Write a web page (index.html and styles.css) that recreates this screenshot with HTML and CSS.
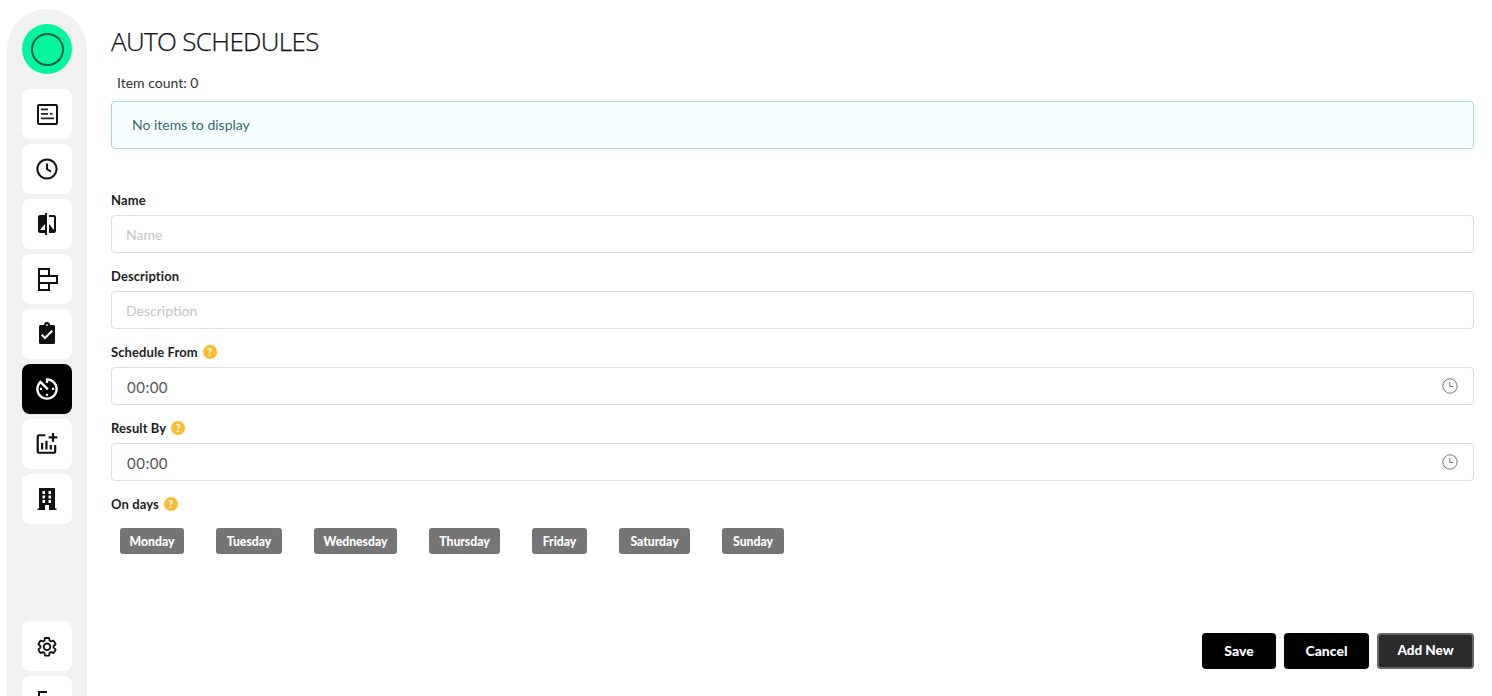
FILE: index.html
```html
<!DOCTYPE html>
<html lang="en">
<head>
<meta charset="utf-8">
<title>Auto Schedules</title>
<link rel="stylesheet" href="styles.css">
</head>
<body>
<div class="app">
  <nav class="sidebar">
    <div class="avatar"><span class="avatar-ring"></span></div>
    <div class="nav-list">
      <a class="nav-btn"><svg class="ic" viewBox="0 0 24 24"><rect x="3" y="3" width="19" height="19" rx="1" fill="none" stroke="#111" stroke-width="2"/><path d="M6 6.500h7v1.700H6zM6 11h7v1.700H6zM15 11h2.500v1.700H15zM6 15.500h13v1.700H6z" fill="#222"/></svg></a>
      <a class="nav-btn"><svg class="ic" viewBox="0 0 24 24"><circle cx="12" cy="12" r="9.600" fill="none" stroke="#111" stroke-width="2"/><path d="M12 6.500V12l4 2.600" fill="none" stroke="#111" stroke-width="2"/></svg></a>
      <a class="nav-btn"><svg class="ic" viewBox="0 0 24 24"><path d="M10 3H5c-1.100 0-2 .9-2 2v14c0 1.100.9 2 2 2h5v2h2V1h-2v2zm0 15H5l5-6v6zm9-15h-5v2h5v13l-5-6v9h5c1.100 0 2-.9 2-2V5c0-1.100-.9-2-2-2z" fill="#111"/></svg></a>
      <a class="nav-btn"><svg class="ic" viewBox="0 0 24 24"><path d="M4 2h10v7H4zM4 9h18v7H4zM4 16h10v7H4z" fill="none" stroke="#111" stroke-width="2"/></svg></a>
      <a class="nav-btn"><svg class="ic" viewBox="0 0 24 24"><path d="M18.500 3H15a3 3 0 0 0-6 0H5.500A1.500 1.500 0 0 0 4 4.500v16A1.500 1.500 0 0 0 5.500 22h13a1.500 1.500 0 0 0 1.500-1.500v-16A1.500 1.500 0 0 0 18.500 3zM12 2.200a.9.9 0 1 1 0 1.800.9.900 0 0 1 0-1.800zM10 17.500l-4-4 1.500-1.500 2.500 2.500 6.500-6.500L18 9.500l-8 8z" fill="#111" fill-rule="evenodd"/></svg></a>
      <a class="nav-btn active"><svg class="ic" viewBox="2 2 20 20"><path d="M11 17c0 .55.45 1 1 1s1-.45 1-1-.45-1-1-1-1 .45-1 1zm0-14v4h2V5.080c3.390.49 6 3.390 6 6.920 0 3.870-3.130 7-7 7s-7-3.130-7-7c0-1.680.59-3.220 1.580-4.420L12 13l1.410-1.410-6.800-6.800v.020C4.420 6.450 3 9.050 3 12c0 4.970 4.020 9 9 9 4.970 0 9-4.030 9-9s-4.030-9-9-9h-1zm7 9c0-.55-.45-1-1-1s-1 .45-1 1 .45 1 1 1 1-.45 1-1zM6 12c0 .55.45 1 1 1s1-.45 1-1-.45-1-1-1-1 .45-1 1z" fill="#fff"/></svg></a>
      <a class="nav-btn"><svg class="ic" viewBox="1.500 1 22 22"><path d="M22 5v2h-3v3h-2V7h-3V5h3V2h2v3h3zm-3 14H5V5h6V3H5c-1.100 0-2 .9-2 2v14c0 1.100.9 2 2 2h14c1.100 0 2-.9 2-2v-6h-2v6zm-4-6v4h2v-4h-2zm-4 4h2V9h-2v8zm-2 0v-6H7v6h2z" fill="#111"/></svg></a>
      <a class="nav-btn"><svg class="ic" viewBox="0 0 24 24"><path d="M4 1h16v20.500h1.500V23h-19v-1.500H4zM7.500 4v3H10V4zM13.500 4v3H16V4zM7.500 8.500v3H10v-3zM13.500 8.500v3H16v-3zM7.500 13v3H10v-3zM13.500 13v3H16v-3zM10 18v5h4v-5z" fill="#111" fill-rule="evenodd"/></svg></a>
    </div>
    <div class="nav-list nav-bottom">
      <a class="nav-btn"><svg class="ic" viewBox="0 0 24 24"><path transform="translate(12 12.800) scale(.92) translate(-12 -12)" d="M19.140 12.940c.04-.3.06-.61.06-.94 0-.32-.02-.64-.07-.94l2.030-1.580c.18-.14.23-.41.12-.61l-1.920-3.320c-.12-.22-.37-.29-.59-.22l-2.390.96c-.5-.38-1.030-.7-1.620-.94l-.36-2.540c-.04-.24-.24-.41-.48-.41h-3.840c-.24 0-.43.17-.47.41l-.36 2.540c-.59.24-1.130.57-1.620.94l-2.390-.96c-.22-.08-.47 0-.59.22L2.740 8.870c-.12.21-.08.47.12.61l2.030 1.580c-.05.3-.09.63-.09.94s.02.64.07.94l-2.030 1.580c-.18.14-.23.41-.12.61l1.920 3.320c.12.22.37.29.59.22l2.390-.96c.5.38 1.030.7 1.620.94l.36 2.540c.05.24.24.41.48.41h3.840c.24 0 .44-.17.47-.41l.36-2.540c.59-.24 1.130-.56 1.620-.94l2.390.96c.22.08.47 0 .59-.22l1.920-3.320c.12-.22.07-.47-.12-.61l-2.010-1.580zM12 15.600c-1.980 0-3.600-1.620-3.600-3.600s1.620-3.600 3.600-3.600 3.600 1.620 3.600 3.600-1.620 3.600-3.600 3.600z" fill="none" stroke="#111" stroke-width="2"/></svg></a>
      <a class="nav-btn"><svg class="ic" viewBox="0 0 24 24"><path d="M12 3H4v18h8" fill="none" stroke="#111" stroke-width="2"/></svg></a>
    </div>
  </nav>

  <main class="content">
    <h1 class="title">AUTO SCHEDULES</h1>
    <p class="count">Item count: 0</p>
    <div class="alert">No items to display</div>

    <form class="form">
      <div class="field">
        <label class="label">Name</label>
        <input class="input" type="text" placeholder="Name">
      </div>
      <div class="field">
        <label class="label">Description</label>
        <input class="input" type="text" placeholder="Description">
      </div>
      <div class="field">
        <label class="label">Schedule From <span class="help">?</span></label>
        <div class="input time"><span class="time-value">00:00</span><svg class="clock" viewBox="0 0 16 16"><circle cx="8" cy="8" r="7.200" fill="none" stroke="#777" stroke-width="1"/><path d="M7.800 3.800V8.500h3.400" fill="none" stroke="#777" stroke-width="1"/></svg></div>
      </div>
      <div class="field">
        <label class="label">Result By <span class="help">?</span></label>
        <div class="input time"><span class="time-value">00:00</span><svg class="clock" viewBox="0 0 16 16"><circle cx="8" cy="8" r="7.200" fill="none" stroke="#777" stroke-width="1"/><path d="M7.800 3.800V8.500h3.400" fill="none" stroke="#777" stroke-width="1"/></svg></div>
      </div>
      <div class="field">
        <label class="label">On days <span class="help">?</span></label>
        <div class="days">
          <button class="day" type="button">Monday</button>
          <button class="day" type="button">Tuesday</button>
          <button class="day" type="button">Wednesday</button>
          <button class="day" type="button">Thursday</button>
          <button class="day" type="button">Friday</button>
          <button class="day" type="button">Saturday</button>
          <button class="day" type="button">Sunday</button>
        </div>
      </div>
      <div class="actions">
        <button class="btn btn-save" type="button">Save</button>
        <button class="btn btn-cancel" type="button">Cancel</button>
        <button class="btn btn-add" type="button">Add New</button>
      </div>
    </form>
  </main>
</div>
</body>
</html>
```

FILE: styles.css
```css
* { box-sizing: border-box; }
html, body { margin: 0; height: 696px; overflow: hidden; background: #fff; }
body { font-family: "Lato", "Noto Sans", sans-serif; color: #212529; font-size: 14px; }
.app { display: flex; height: 696px; overflow: hidden; padding-left: 7px; padding-top: 9px; align-items: flex-start; }
.sidebar { width: 80px; flex: none; height: 687px; overflow: hidden; background: #f1f1f1; border-radius: 40px 40px 0 0; padding: 15px 15px 0; display: flex; flex-direction: column; }
.avatar { width: 50px; height: 50px; border-radius: 50%; background: #04f5a0; display: flex; align-items: center; justify-content: center; flex: none; }
.avatar-ring { width: 33px; height: 33px; border-radius: 50%; border: 2px solid #0c5a45; }
.nav-list { display: flex; flex-direction: column; gap: 5px; margin-top: 15px; flex: none; }
.nav-bottom { margin-top: 97px; }
.nav-btn { width: 50px; height: 50px; background: #fff; border-radius: 8px; display: flex; align-items: center; justify-content: center; flex: none; }
.nav-btn.active { background: #000; }
.ic { width: 24px; height: 24px; display: block; }
.content { flex: 1; min-width: 0; padding: 0 18px 0 24px; }
.title { margin: 14px 0 0; font-family: "Open Sans", sans-serif; font-weight: 300; font-size: 26px; line-height: 36px; color: #111; letter-spacing: -0.65px; -webkit-text-stroke: 0.25px #111; }
.count { margin: 14px 0 0 6px; line-height: 20px; font-size: 14px; color: #333; }
.alert { margin-top: 8px; height: 48px; border: 1px solid #a6d8de; border-radius: 4px; background: #f6ffff; color: #356a70; padding: 0 20px 2px; display: flex; align-items: center; }
.form { margin-top: 41px; display: flex; flex-direction: column; }
.field { display: flex; flex-direction: column; margin-bottom: 13px; }
.label { font-size: 13px; letter-spacing: 0.1px; font-weight: 700; line-height: 20px; color: #1d1d1d; height: 20px; margin-bottom: 5px; display: flex; gap: 5px; align-items: center; }
.help { width: 14px; height: 14px; border-radius: 50%; background: #fdbb2f; color: #fff; font-size: 11px; font-weight: 900; line-height: 14px; text-align: center; display: inline-block; }
.input { height: 38px; width: 100%; border: 1px solid #dcdcdc; border-radius: 4px; background: #fff; padding: 0 14px; font: inherit; font-size: 14px; color: #555; outline: none; }
.input::placeholder { color: #c4c4c4; }
.time { display: flex; align-items: center; justify-content: space-between; padding: 0 15px; font-size: 15px; letter-spacing: 0.5px; }
.time-value { padding-top: 2px; }
.clock { width: 16px; height: 16px; }
.days { display: flex; gap: 32px; padding: 9px 9px 0; }
.day { height: 26px; border: 0; border-radius: 3px; background: #757575; color: #fff; font-family: inherit; font-size: 12.200px; font-weight: 900; padding: 0; white-space: nowrap; }
.day:nth-child(1) { width: 64px; }
.day:nth-child(2) { width: 66px; }
.day:nth-child(3) { width: 83px; }
.day:nth-child(4) { width: 71px; }
.day:nth-child(5) { width: 55px; }
.day:nth-child(6) { width: 71px; }
.day:nth-child(7) { width: 62px; }
.actions { display: flex; justify-content: flex-end; gap: 8px; margin-top: 66px; }
.btn { height: 36px; border: 0; border-radius: 4px; background: #000; color: #fff; font-family: inherit; font-size: 14px; font-weight: 900; padding: 0 0 2px; }
.btn-save { width: 74px; }
.btn-cancel { width: 85px; }
.btn-add { width: 97px; background: #2b2b2b; border: 2px solid #666; font-size: 13.500px; }
```
